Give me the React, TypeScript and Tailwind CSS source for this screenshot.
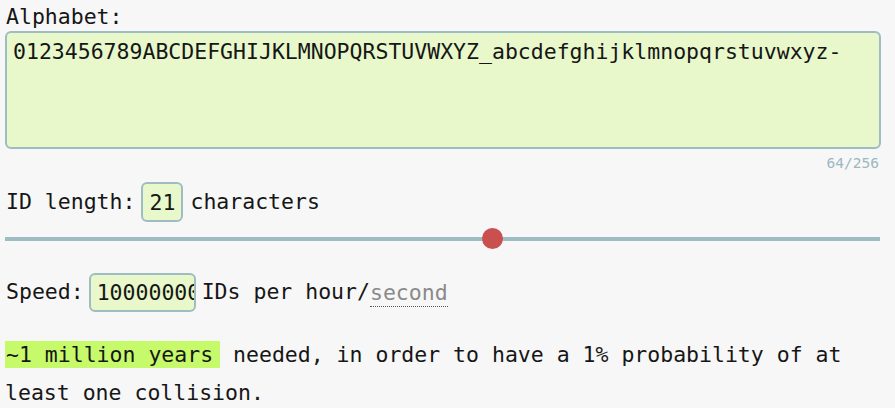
import React from "react";

export default function App() {
  const mono = { fontFamily: '"DejaVu Sans Mono", "Liberation Mono", monospace' };
  return (
    <div
      className="w-[895px] h-[408px] overflow-hidden bg-[#f7f7f7] text-[#161616] text-[21.5px] pl-[5px] pr-[14px] pt-[3px]"
      style={mono}
    >
      <div className="leading-[28px] pl-[1px]">Alphabet:</div>
      <textarea
        readOnly
        value="0123456789ABCDEFGHIJKLMNOPQRSTUVWXYZ_abcdefghijklmnopqrstuvwxyz-"
        className="block w-[876px] h-[118px] resize-none rounded-[6px] border-2 border-[#9dbdc2] bg-[#e8f8cb] pl-[6px] pt-[5px] leading-[28px] outline-none text-[#161616]"
      />
      <div className="w-[876px] text-right text-[14.5px] leading-[28px] text-[#9ab8c1] pr-[2px]">64/256</div>
      <div className="mt-[5px] flex items-center h-[40px] pl-[1px]">
        <span>ID length:</span>
        <input
          readOnly
          value="21"
          className="ml-[6px] w-[42px] h-[40px] rounded-[6px] border-2 border-[#9dbdc2] bg-[#e8f8cb] text-center outline-none"
        />
        <span className="ml-[7px]">characters</span>
      </div>
      <div className="relative mt-[6px] h-[22px] w-[875px]">
        <div className="absolute left-0 right-0 top-[9px] h-[4px] bg-[#9dbdc2]" />
        <div className="absolute left-[477px] top-0 w-[21px] h-[21px] rounded-full bg-[#c9504f]" />
      </div>
      <div className="mt-[23px] flex items-center h-[39px] pl-[1px]">
        <span>Speed:</span>
        <input
          readOnly
          value="10000000000"
          className="ml-[5px] w-[107px] h-[39px] rounded-[6px] border-2 border-[#9dbdc2] bg-[#e8f8cb] pl-[6px] outline-none"
        />
        <span className="ml-[6px]">IDs per hour/</span>
        <span className="text-[#8a8a8a] border-b border-dotted border-[#555] leading-[26px] mt-[2px]">second</span>
      </div>
      <p className="mt-[24px] leading-[38px]">
        <span className="bg-[#c6fa6b] py-[1px] pl-[1px] pr-[7px]">~1 million years</span> needed, in order to have a 1% probability of at least one collision.
      </p>
    </div>
  );
}
